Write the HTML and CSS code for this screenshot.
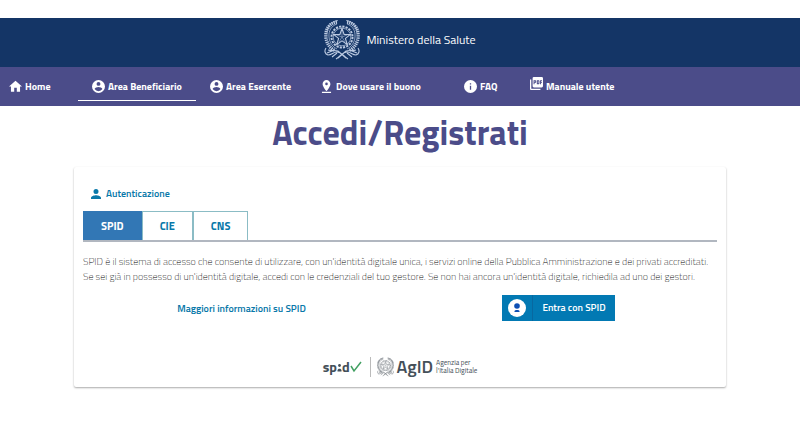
FILE: index.html
```html
<!DOCTYPE html>
<html lang="it">
<head>
<meta charset="utf-8">
<meta name="viewport" content="width=device-width, initial-scale=1">
<title>Accedi/Registrati</title>
<link rel="stylesheet" href="styles.css">
</head>
<body>
<svg class="defs" aria-hidden="true">
  <symbol id="emblem" viewBox="0 0 36 42">
    <g fill="none" stroke="currentColor">
      <circle cx="18" cy="18" r="10.5" stroke-width="2" stroke-dasharray="2.2 1.1"/>
      <circle cx="18" cy="18" r="8.8" stroke-width=".7"/>
      <path d="M18 9.5l2.1 5.9 6.2.2-4.9 3.8 1.8 6-5.2-3.5-5.2 3.5 1.8-6-4.9-3.8 6.2-.2z" stroke-width="1.1"/>
      <path d="M18 12v6l5-2M18 18l3 5M18 18l-3 5M18 18l-5-2" stroke-width=".5"/>
      <path d="M13 3C5 4 1 11 2 19c1 6 4 10 9 13M23 3c8 1 12 8 11 16-1 6-4 10-9 13" stroke-width="3.4" stroke-dasharray="1.3 .8"/>
      <path d="M14 1.5C7 2.500 3.500 7 3 13M22 1.500c7 1 10.500 5.500 11 11.500M13 5C7 7 4.500 12 5 18s4 10 8 12M23 5c6 2 8.500 7 8 13s-4 10-8 12" stroke-width=".7"/>
      <path d="M2 29c-2 3-1 6 2 7 4 0 5-3 9-3 5 0 6 4 11 7M34 29c2 3 1 6-2 7-4 0-5-3-9-3-5 0-6 4-11 7M4 31c3 1 7 0 10 1l8 7M32 31c-3 1-7 0-10 1l-8 7M3 34l5-2M33 34l-5-2M8 38l5-4M28 38l-5-4" stroke-width="1.1"/>
    </g>
  </symbol>
  <symbol id="account" viewBox="2 2 20 20"><path fill="currentColor" d="M12 2a10 10 0 1 0 0 20 10 10 0 0 0 0-20zm0 3a3 3 0 1 1 0 6 3 3 0 0 1 0-6zm0 14.200a7.200 7.200 0 0 1-6-3.220c.03-1.990 4-3.080 6-3.080s5.970 1.090 6 3.080a7.200 7.200 0 0 1-6 3.220z"/></symbol>
</svg>
<header class="brand">
  <svg class="brand-emblem" aria-hidden="true"><use href="#emblem"/></svg>
  <span>Ministero della Salute</span>
</header>
<nav class="menu">
  <a class="menu-item menu-home" href="#"><svg class="icon" viewBox="2 2 20 20" aria-hidden="true"><path fill="currentColor" d="M10 20v-6h4v6h5v-8h3L12 3 2 12h3v8z"/></svg>Home</a>
  <a class="menu-item" href="#" aria-current="page"><svg class="icon" aria-hidden="true"><use href="#account"/></svg>Area Beneficiario</a>
  <a class="menu-item" href="#"><svg class="icon" aria-hidden="true"><use href="#account"/></svg>Area Esercente</a>
  <a class="menu-item" href="#"><svg class="icon" viewBox="2 2 20 20" aria-hidden="true"><path fill="currentColor" d="M18 8c0-3.310-2.690-6-6-6S6 4.690 6 8c0 4.500 6 11 6 11s6-6.500 6-11zm-8 0a2 2 0 1 1 4 0 2 2 0 0 1-4 0zM5 20v2h14v-2z"/></svg>Dove usare il buono</a>
  <a class="menu-item" href="#"><svg class="icon" viewBox="2 2 20 20" aria-hidden="true"><path fill="currentColor" fill-rule="evenodd" d="M12 2a10 10 0 1 0 0 20 10 10 0 0 0 0-20zm1 15h-2v-6h2zm0-8h-2V7h2z"/></svg>FAQ</a>
  <a class="menu-item" href="#"><svg class="icon icon-raised" viewBox="2 2 20 20" aria-hidden="true"><path fill="currentColor" fill-rule="evenodd" d="M20 2H8a2 2 0 0 0-2 2v12c0 1.100.9 2 2 2h12a2 2 0 0 0 2-2V4a2 2 0 0 0-2-2zm-8.500 7.500c0 .83-.67 1.500-1.500 1.500H9v2H7.500V7H10c.83 0 1.500.67 1.500 1.500zm5 2c0 .83-.67 1.500-1.500 1.500h-2.500V7H15c.83 0 1.500.67 1.500 1.500zm4-3H19v1h1.500V11H19v2h-1.500V7h3zM9 9.500h1v-1H9zM4 6H2v14c0 1.100.9 2 2 2h14v-2H4zm10 5.500h1v-3h-1z"/></svg>Manuale utente</a>
</nav>
<main>
  <h1>Accedi/Registrati</h1>
  <section class="card">
    <h2 class="card-title"><svg class="person" viewBox="4 4 16 16" aria-hidden="true"><path fill="currentColor" d="M12 12a4 4 0 1 0 0-8 4 4 0 0 0 0 8zm0 2c-2.670 0-8 1.340-8 4v2h16v-2c0-2.660-5.330-4-8-4z"/></svg>Autenticazione</h2>
    <div class="tabs" role="tablist">
      <button class="tab" type="button" role="tab" aria-selected="true">SPID</button>
      <button class="tab" type="button" role="tab" aria-selected="false">CIE</button>
      <button class="tab" type="button" role="tab" aria-selected="false">CNS</button>
    </div>
    <p class="intro">SPID è il sistema di accesso che consente di utilizzare, con un'identità digitale unica, i servizi online della Pubblica Amministrazione e dei privati accreditati.<br>Se sei già in possesso di un'identità digitale, accedi con le credenziali del tuo gestore. Se non hai ancora un'identità digitale, richiedila ad uno dei gestori.</p>
    <div class="actions">
      <a class="more" href="#">Maggiori informazioni su SPID</a>
      <button class="login" type="button">
        <span class="login-icon"><svg viewBox="0 0 18 18" aria-hidden="true"><circle cx="9" cy="9" r="9" fill="#fff"/><circle cx="9" cy="7" r="2.800" fill="#0d4fb4"/><path d="M6.500 13v-1c0-1.500 5-1.500 5 0v1z" fill="#0d4fb4"/></svg></span>
        <span class="login-text">Entra con SPID</span>
      </button>
    </div>
    <footer class="partners">
      <span class="spid">sp<svg class="spid-i" viewBox="0 0 5 10" aria-hidden="true"><circle cx="2.500" cy="2.500" r="1.400" fill="currentColor"/><path d="M.5 8.500V7.500c0-2.500 4-2.500 4 0v1z" fill="currentColor"/></svg>d<svg class="check" viewBox="0 0 12 12" aria-hidden="true"><path d="M1 5l3 5 7-9" fill="none" stroke="#42a062" stroke-width="1.500"/></svg></span>
      <span class="agid"><svg class="agid-emblem" viewBox="0 0 36 42" aria-hidden="true"><use href="#emblem"/></svg><span class="agid-name">AgID</span><span class="agid-text"><span>Agenzia per</span><span>l'Italia Digitale</span></span></span>
    </footer>
  </section>
</main>
</body>
</html>
```
FILE: styles.css
```css
* { box-sizing: border-box; }
body {
  margin: 0;
  padding-top: 18px;
  background: #fff;
  color: #455059;
  font-family: "Titillium Web", "Noto Sans", sans-serif;
  font-size: 10px;
}
button { font: inherit; cursor: pointer; }
a { color: inherit; text-decoration: none; }
.defs { position: absolute; width: 0; height: 0; }
.brand {
  display: flex;
  align-items: center;
  justify-content: center;
  gap: 6px;
  height: 49px;
  padding-bottom: 6px;
  background: #143566;
  color: #fff;
  font-size: 12px;
}
.brand-emblem { width: 36px; height: 42px; color: #bdcbe2; }
.menu {
  display: grid;
  grid-template-columns: 78px 118px 110px 144px 66px auto;
  height: 39px;
  padding-bottom: 5px;
  background: #4b4c89;
  color: #fff;
  font-weight: 700;
}
.menu-item {
  display: flex;
  align-items: center;
  gap: 3px;
  padding: 6px 14px 0;
  border-bottom: 1px solid transparent;
  white-space: nowrap;
}
.menu-home { padding-left: 9px; }
.menu-item[aria-current="page"] { border-bottom-color: #fff; }
.icon { width: 13px; height: 13px; flex: none; }
.icon-raised { margin-bottom: 6px; }
h1 {
  margin: 4px 0 13px;
  color: #4b4c89;
  font-size: 34px;
  line-height: 44px;
  text-align: center;
}
.card {
  width: 81.5%;
  margin: 0 auto 40px;
  padding: 20px 9px 10px;
  border-radius: 2px;
  box-shadow: 0 1px 2px #aaa;
}
.card-title {
  display: flex;
  align-items: center;
  gap: 5px;
  margin: 0 0 10px;
  padding-left: 8px;
  color: #0878a9;
  font-size: 10px;
  font-weight: 600;
  line-height: 14px;
}
.person { width: 10px; height: 10px; }
.tabs { display: flex; border-bottom: 2px solid #b1b7c0; }
.tab {
  height: 29px;
  padding: 0 17px;
  border: 1px solid #8bbcc5;
  border-bottom: 0;
  background: #fff;
  color: #0878a9;
  font-size: 11px;
  font-weight: 700;
}
.tab[aria-selected="true"] {
  border-color: #3277b5;
  background: #3277b5;
  color: #fff;
}
.intro { margin: 12px 0 11px; font-size: 10px; font-weight: 200; line-height: 15px; color: #000; }
.actions {
  display: grid;
  grid-template-columns: 1fr 1fr;
  align-items: center;
  justify-items: center;
}
.more { color: #0878a9; font-weight: 600; }
.login {
  display: flex;
  align-items: stretch;
  height: 26px;
  padding: 0;
  border: 0;
  background: #0279b3;
  color: #fff;
  font-weight: 600;
  line-height: 26px;
}
.login-icon { display: flex; align-items: center; padding: 0 6px; border-right: 1px solid #0868a0; }
.login-icon svg { width: 18px; height: 18px; }
.login-text { padding: 0 9px; }
.partners {
  display: flex;
  align-items: center;
  justify-content: center;
  gap: 8px;
  margin-top: 36px;
}
.spid { display: flex; align-items: center; font-size: 14px; font-weight: 700; line-height: 20px; }
.spid-i { width: 5px; height: 10px; margin-top: 2px; }
.check { width: 12px; height: 12px; }
.agid { display: flex; align-items: center; gap: 3px; padding-left: 6px; border-left: 1px solid #bbb; }
.agid-emblem { width: 17px; height: 20px; color: #7b8187; }
.agid-name { font-size: 18px; font-weight: 600; line-height: 20px; }
.agid-text { display: grid; font-size: 7px; line-height: 8px; }
```
